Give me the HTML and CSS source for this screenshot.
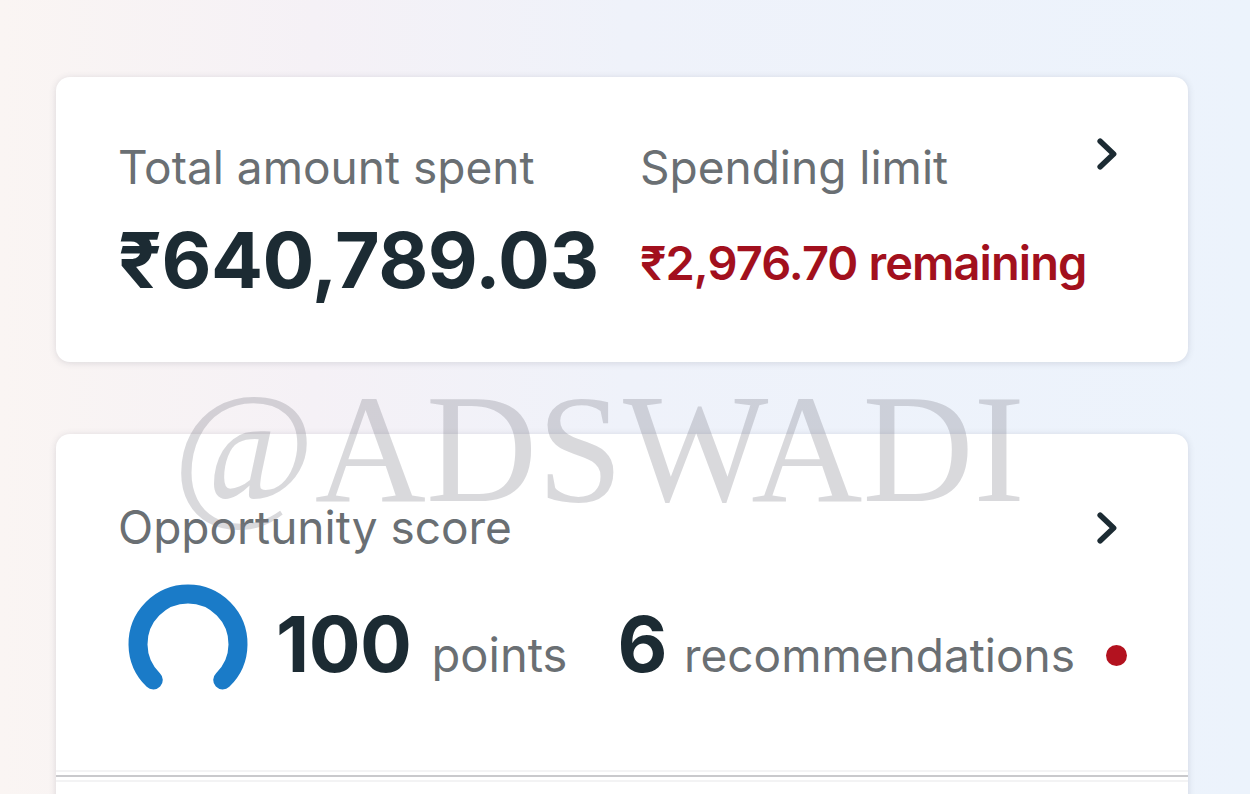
FILE: index.html
```html
<!DOCTYPE html>
<html lang="en">
<head>
<meta charset="utf-8">
<title>Billing summary</title>
<link rel="stylesheet" href="styles.css">
</head>
<body>
<div class="page">
  <section class="card card-spend">
    <div class="spend-total">
      <div class="label">Total amount spent</div>
      <div class="big-amount">₹640,789.03</div>
    </div>
    <div class="spend-limit">
      <div class="label">Spending limit</div>
      <div class="remaining">₹2,976.70 remaining</div>
    </div>
    <svg class="chev" viewBox="0 0 20 32" width="20" height="32"><path d="M3.2 3.2 L16.6 16 L3.2 28.8" fill="none" stroke="#1c2b33" stroke-width="5.6" stroke-linecap="round" stroke-linejoin="round"/></svg>
  </section>

  <section class="card card-score">
    <div class="score-head">
      <div class="label">Opportunity score</div>
      <svg class="chev" viewBox="0 0 20 32" width="20" height="32"><path d="M3.2 3.2 L16.6 16 L3.2 28.8" fill="none" stroke="#1c2b33" stroke-width="5.6" stroke-linecap="round" stroke-linejoin="round"/></svg>
    </div>
    <div class="score-row">
      <svg class="gauge" viewBox="0 0 124 112" width="124" height="112">
        <path d="M27.3 98 A50 50 0 1 1 96.7 98" fill="none" stroke="#1a7bc8" stroke-width="19" stroke-linecap="round"/>
      </svg>
      <div class="metric metric-points"><span class="metric-num">100</span><span class="metric-unit">points</span></div>
      <div class="metric metric-rec"><span class="metric-num">6</span><span class="metric-unit unit-rec">recommendations</span></div>
      <span class="dot"></span>
    </div>
    <div class="divider"></div>
  </section>

  <div class="watermark">@ADSWADI</div>
</div>
</body>
</html>
```

FILE: styles.css
```css
html, body {
  margin: 0;
  padding: 0;
}
body {
  width: 1250px;
  height: 794px;
  overflow: hidden;
  font-family: Inter, "Noto Sans", "Liberation Sans", sans-serif;
  background: linear-gradient(90deg, #faf5f3 0%, #f5f1f6 25%, #eff2fa 50%, #ecf3fc 100%);
}
.page {
  position: relative;
  padding: 77px 62px 0 56px;
  display: flex;
  flex-direction: column;
  gap: 72px;
}
.card {
  background: #ffffff;
  border-radius: 14px;
  box-shadow: 0 1px 7px rgba(60, 70, 90, 0.16);
}
.card-spend {
  height: 285px;
  box-sizing: border-box;
  display: flex;
  align-items: flex-start;
  padding: 63px 71px 0 62px;
}
.spend-total {
  width: 522px;
  flex: none;
}
.spend-limit {
  flex: 1;
}
.label {
  font-size: 46px;
  line-height: 54px;
  font-weight: 400;
  color: #6a6f73;
}
.big-amount {
  margin-top: 22px;
  font-size: 77px;
  line-height: 88px;
  font-weight: 700;
  color: #1c2b33;
  letter-spacing: -0.5px;
}
.remaining {
  margin-top: 42px;
  font-size: 47px;
  line-height: 54px;
  font-weight: 600;
  color: #a2101d;
  letter-spacing: -0.9px;
}
.chev {
  display: block;
  flex: none;
}
.card-spend .chev {
  margin-top: -2px;
}
.card-score {
  height: 420px;
  box-sizing: border-box;
  padding: 66px 0 0 0;
}
.score-head {
  display: flex;
  justify-content: space-between;
  align-items: flex-start;
  padding: 0 71px 0 62px;
}
.score-head .chev {
  margin-top: 12px;
}
.score-row {
  display: flex;
  align-items: flex-start;
  margin-top: 28px;
  padding-left: 70px;
  height: 112px;
}
.gauge {
  display: block;
  flex: none;
}
.metric {
  display: flex;
  align-items: baseline;
  margin-top: 24px;
}
.metric-points {
  margin-left: 26px;
}
.metric-rec {
  margin-left: 50px;
}
.metric-num {
  font-size: 77px;
  font-weight: 700;
  color: #1c2b33;
  line-height: 1;
  letter-spacing: -0.5px;
}
.metric-unit {
  margin-left: 20px;
  font-size: 47px;
  color: #6a6f73;
  line-height: 1;
}
.unit-rec {
  margin-left: 17px;
  font-size: 46px;
}
.dot {
  width: 21px;
  height: 21px;
  border-radius: 50%;
  background: #b3121f;
  margin-left: 31px;
  margin-top: 63px;
}
.divider {
  margin-top: 81px;
  height: 2px;
  background: #c9c9cc;
  box-shadow: 0 -5px 0 #f3f3f4, 0 5px 0 #f3f3f4;
}
.watermark {
  position: absolute;
  left: 173px;
  top: 372px;
  font-family: "Liberation Serif", serif;
  font-size: 154px;
  line-height: 1;
  color: rgba(120, 120, 130, 0.28);
  pointer-events: none;
  white-space: nowrap;
}
```
